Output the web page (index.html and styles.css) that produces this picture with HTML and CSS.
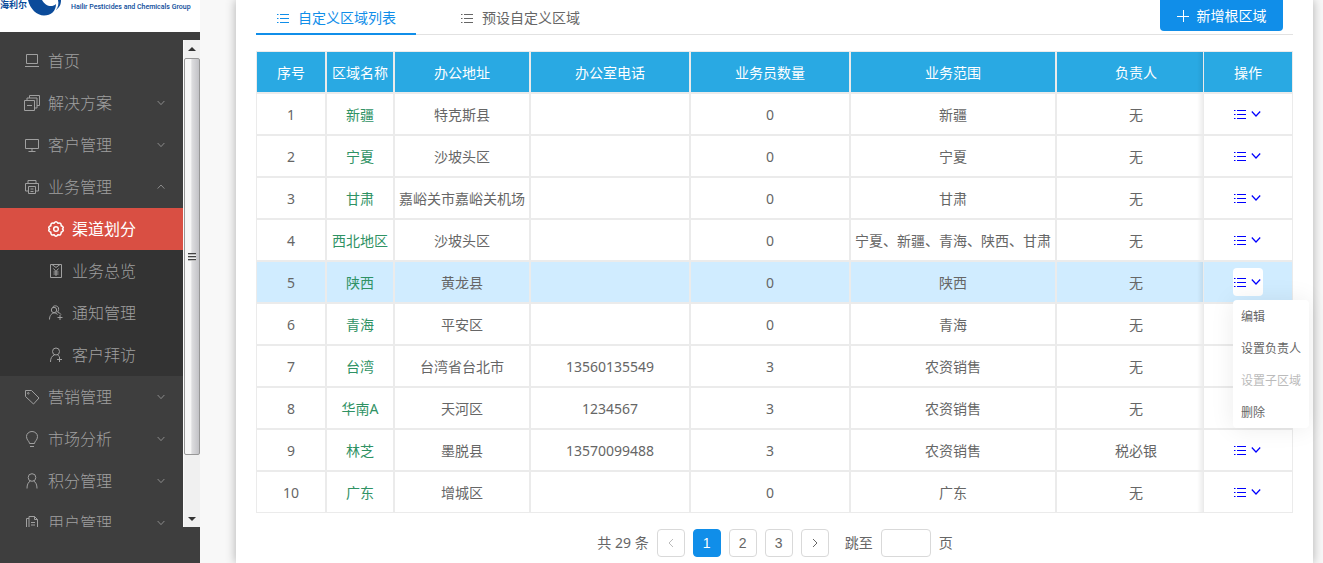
FILE: index.html
```html
<!DOCTYPE html>
<html lang="zh-CN">
<head>
<meta charset="utf-8">
<title>渠道划分</title>
<link rel="stylesheet" href="styles.css">
</head>
<body>
<svg class="sprite" aria-hidden="true">
  <symbol id="list" viewBox="0 0 12 12"><path d="M3 2.500h9M3 6.500h9M3 10.500h9M0 2.500h1.500M0 6.500h1.500M0 10.500h1.500"/></symbol>
  <symbol id="down" viewBox="0 0 10 10"><path d="M.8 2.500 5 7 9.200 2.500"/></symbol>
  <symbol id="up" viewBox="0 0 10 10"><path d="M.8 7 5 2.500 9.200 7"/></symbol>
</svg>
<div class="app">
  <aside class="sidebar">
    <div class="brand">
      <span class="brand-cn">海利尔</span>
      <svg class="brand-mark" viewBox="0 0 34 16"><path fill="#0b4b9a" d="M0 0C2 9 9 15.500 16 15.500S28 11 28 4C24 8 17 6 14 0Z"/><path fill="#0b4b9a" d="M33 0C33 4 32 7 28 10C30 7 31 4 30 0Z"/></svg>
      <span class="brand-en">Hailir Pesticides and Chemicals Group</span>
    </div>
    <div class="scroller">
      <nav class="menu">
        <a class="item" href="#"><svg class="icon" viewBox="0 0 16 16"><path d="M2.500 1.500h11v9h-11zM1 13.500h14"/></svg>首页</a>
        <a class="item" href="#"><svg class="icon" viewBox="0 0 16 16"><path d="M.5 5.500h10v10H.5zM3 10.500h5M3 5.500v-2.500h10v10h-2.500M5.500 3V.5h10v10H13"/></svg>解决方案<svg class="arrow"><use href="#down"/></svg></a>
        <a class="item" href="#"><svg class="icon" viewBox="0 0 16 16"><path d="M1.500 2.500h13v9h-13zM8 11.500v3M4.500 14.500h7"/></svg>客户管理<svg class="arrow"><use href="#down"/></svg></a>
        <a class="item" href="#"><svg class="icon" viewBox="0 0 16 16"><path d="M4 4.500v-3h8v3M4 12H1.500V4.500h13V12H12M4.500 7.500h7v7h-7zM6.500 10h3M6.500 12.500h3"/></svg>业务管理<svg class="arrow"><use href="#up"/></svg></a>
        <div class="submenu">
          <a class="item active" href="#"><svg class="icon" viewBox="0 0 16 16"><path d="M6 2.200Q8-.5 10 2.200Q13.300 1.400 13.200 4.700Q16.500 6 14.500 8Q16.500 10 13.200 11.300Q13.300 14.600 10 13.800Q8 16.500 6 13.800Q2.700 14.600 2.800 11.300Q-.5 10 1.500 8Q-.5 6 2.800 4.700Q2.700 1.400 6 2.200Z"/><circle cx="8" cy="8" r="2.300"/></svg>渠道划分</a>
          <a class="item" href="#"><svg class="icon" viewBox="0 0 16 16"><path d="M2.500 1.500h11v13h-11zM4 1.500l4 3 4-3M5.500 5.500 8 8.500l2.500-3M8 8.500V13M5.500 9h5M5.500 11h5"/></svg>业务总览</a>
          <a class="item" href="#"><svg class="icon" viewBox="0 0 16 16"><circle cx="6" cy="5" r="2.700"/><path d="M4.500 2.500C5.500 0 10 .5 10.500 3c.5 2-.5 4-2 5M1.500 14.500C1.500 10 4 8 6.500 8c1 0 2 .5 3 1.500M10 7.500c1.500.5 2.500 1 3 2M9.500 12.500h5M12 10v5"/></svg>通知管理</a>
          <a class="item" href="#"><svg class="icon" viewBox="0 0 16 16"><circle cx="8" cy="4.500" r="3.500"/><path d="M2.500 15c0-3.500 1-6 4-7M9.500 8l2 1.500M9 12.500h5M11.500 10v5"/></svg>客户拜访</a>
        </div>
        <a class="item" href="#"><svg class="icon" viewBox="0 0 16 16"><path d="M1.500 1.500h6L15 9l-5.500 6L1.500 7.500z"/><circle cx="4.300" cy="4.300" r=".8"/></svg>营销管理<svg class="arrow"><use href="#down"/></svg></a>
        <a class="item" href="#"><svg class="icon" viewBox="0 0 16 16"><path d="M5.500 12.500C5.500 10 2.500 9.500 2.500 5.500a5.500 5 0 0 1 11 0C13.500 9.500 10.500 10 10.500 12.500zM6 15.500h4"/></svg>市场分析<svg class="arrow"><use href="#down"/></svg></a>
        <a class="item" href="#"><svg class="icon" viewBox="0 0 16 16"><circle cx="8" cy="4.500" r="3.800"/><path d="M3 15.500C3 12 4 9 6.500 8M13 15.500C13 12 12 9 9.500 8"/></svg>积分管理<svg class="arrow"><use href="#down"/></svg></a>
        <a class="item" href="#"><svg class="icon" viewBox="0 0 16 16"><path d="M5 1.500h5.500l3 3v10H5zM10.500 1.500v3h3M5 3.500H2.500v11H5M7 7.500h4M7 10h4M7 12.500h4"/></svg>用户管理<svg class="arrow"><use href="#down"/></svg></a>
      </nav>
      <div class="scrollbar" aria-hidden="true">
        <svg class="sb-arrow" viewBox="0 0 8 8"><path d="M0 6 4 2l4 4z"/></svg>
        <div class="thumb"><i></i></div>
        <svg class="sb-arrow" viewBox="0 0 8 8"><path d="M0 2l4 4 4-4z"/></svg>
      </div>
    </div>
  </aside>
  <main class="content">
    <section class="card">
      <div class="tabs">
        <button class="tab selected"><svg class="list"><use href="#list"/></svg>自定义区域列表</button>
        <button class="tab"><svg class="list"><use href="#list"/></svg>预设自定义区域</button>
        <button class="add"><svg class="plus" viewBox="0 0 12 12"><path d="M6.500 0v12M0 6.500h12"/></svg>新增根区域</button>
      </div>
      <table class="grid">
        <colgroup><col class="c1"><col class="c2"><col class="c3"><col class="c4"><col class="c4"><col class="c6"><col class="c7"><col class="c8"></colgroup>
        <thead><tr><th>序号</th><th>区域名称</th><th>办公地址</th><th>办公室电话</th><th>业务员数量</th><th>业务范围</th><th>负责人</th><th>操作</th></tr></thead>
        <tbody>
          <tr><td>1</td><td>新疆</td><td>特克斯县</td><td></td><td>0</td><td>新疆</td><td>无</td><td><button class="ops" aria-label="操作"><svg class="list"><use href="#list"/></svg><svg class="chev"><use href="#down"/></svg></button></td></tr>
          <tr><td>2</td><td>宁夏</td><td>沙坡头区</td><td></td><td>0</td><td>宁夏</td><td>无</td><td><button class="ops" aria-label="操作"><svg class="list"><use href="#list"/></svg><svg class="chev"><use href="#down"/></svg></button></td></tr>
          <tr><td>3</td><td>甘肃</td><td>嘉峪关市嘉峪关机场</td><td></td><td>0</td><td>甘肃</td><td>无</td><td><button class="ops" aria-label="操作"><svg class="list"><use href="#list"/></svg><svg class="chev"><use href="#down"/></svg></button></td></tr>
          <tr><td>4</td><td>西北地区</td><td>沙坡头区</td><td></td><td>0</td><td>宁夏、新疆、青海、陕西、甘肃</td><td>无</td><td><button class="ops" aria-label="操作"><svg class="list"><use href="#list"/></svg><svg class="chev"><use href="#down"/></svg></button></td></tr>
          <tr class="hover"><td>5</td><td>陕西</td><td>黄龙县</td><td></td><td>0</td><td>陕西</td><td>无</td><td><div class="dropdown"><button class="ops open" aria-label="操作"><svg class="list"><use href="#list"/></svg><svg class="chev"><use href="#down"/></svg></button><div class="popup"><button>编辑</button><button>设置负责人</button><button disabled>设置子区域</button><button>删除</button></div></div></td></tr>
          <tr><td>6</td><td>青海</td><td>平安区</td><td></td><td>0</td><td>青海</td><td>无</td><td><button class="ops" aria-label="操作"><svg class="list"><use href="#list"/></svg><svg class="chev"><use href="#down"/></svg></button></td></tr>
          <tr><td>7</td><td>台湾</td><td>台湾省台北市</td><td>13560135549</td><td>3</td><td>农资销售</td><td>无</td><td><button class="ops" aria-label="操作"><svg class="list"><use href="#list"/></svg><svg class="chev"><use href="#down"/></svg></button></td></tr>
          <tr><td>8</td><td>华南A</td><td>天河区</td><td>1234567</td><td>3</td><td>农资销售</td><td>无</td><td><button class="ops" aria-label="操作"><svg class="list"><use href="#list"/></svg><svg class="chev"><use href="#down"/></svg></button></td></tr>
          <tr><td>9</td><td>林芝</td><td>墨脱县</td><td>13570099488</td><td>3</td><td>农资销售</td><td>税必银</td><td><button class="ops" aria-label="操作"><svg class="list"><use href="#list"/></svg><svg class="chev"><use href="#down"/></svg></button></td></tr>
          <tr><td>10</td><td>广东</td><td>增城区</td><td></td><td>0</td><td>广东</td><td>无</td><td><button class="ops" aria-label="操作"><svg class="list"><use href="#list"/></svg><svg class="chev"><use href="#down"/></svg></button></td></tr>
        </tbody>
      </table>
      <div class="pager">
        <span>共 29 条</span>
        <button class="page" disabled aria-label="上一页"><svg viewBox="0 0 8 8"><path d="M6 0 2 4l4 4"/></svg></button>
        <button class="page current">1</button>
        <button class="page">2</button>
        <button class="page">3</button>
        <button class="page" aria-label="下一页"><svg viewBox="0 0 8 8"><path d="m2 0 4 4-4 4"/></svg></button>
        <label class="jump">跳至<input type="text">页</label>
      </div>
    </section>
  </main>
</div>
</body>
</html>
```
FILE: styles.css
```css
* { box-sizing: border-box; }
body { margin: 0; color: #666; font: 14px/20px "Noto Sans", "Noto Sans CJK SC", sans-serif; }
button, input { font: inherit; color: inherit; margin: 0; padding: 0; border: 0; background: none; }
svg { fill: none; stroke: currentColor; flex: none; }
.sprite { position: absolute; width: 0; height: 0; }
.app { display: flex; height: 100vh; overflow: hidden; }

.sidebar { flex: none; width: 200px; background: #3e3e3e; }
.brand { display: flex; height: 32px; overflow: hidden; background: #fff; color: #0b4b9a; white-space: nowrap; }
.brand svg { stroke: none; }
.brand-cn { width: 28px; font-size: 9px; line-height: 10px; font-weight: 700; }
.brand-mark { width: 34px; height: 16px; }
.brand-en { margin-left: 9px; font: 500 8px/14px "Liberation Sans Narrow", Roboto, sans-serif; font-size: 7px; }
.scroller { display: flex; height: calc(100vh - 76px); margin-top: 8px; overflow: hidden; }
.menu { flex: 1; }
.item { display: flex; align-items: center; height: 42px; padding: 0 18px 0 24px; color: #a0a0a0; font-size: 16px; font-weight: 300; text-decoration: none; }
.icon { width: 16px; height: 16px; margin-right: 8px; }
.arrow { width: 8px; height: 8px; margin-left: auto; }
.submenu { background: #333; }
.submenu .item { padding-left: 48px; }
.submenu .active { background: #d94f43; color: #fff; font-weight: 400; }
.active .icon { stroke-width: 1.5; }
.scrollbar { display: flex; flex-direction: column; width: 17px; background: #f0f0f0; border-left: 1px solid #fafafa; }
.sb-arrow { width: 8px; height: 8px; margin: 5px auto; fill: #333; stroke: none; }
.thumb { flex: 398; display: flex; align-items: center; justify-content: center; border: 1px solid #979797; border-radius: 2px; background: linear-gradient(90deg, #f6f6f6 0 40%, #dcdcde 50%, #c2c2c6); }
.thumb i { width: 8px; height: 8px; background: repeating-linear-gradient(#444 0 1px, #bbb 1px 2px, #eee 2px 3px); }
.scrollbar .sb-arrow:last-child { margin-top: 60px; margin-bottom: 4px; }

.content { flex: 1; min-width: 0; padding: 0 10px 0 36px; background: #f8f8f8; }
.card { height: 100%; padding: 0 20px; background: #fff; box-shadow: 0 0 10px rgba(0, 0, 0, .3); }
.tabs { display: flex; height: 35px; border-bottom: 1px solid #e2e2e2; }
.tab { display: flex; align-items: center; height: 35px; width: 160px; margin-right: 24px; padding: 2px 0 0 21px; border-bottom: 2px solid transparent; }
.tab.selected { color: #108ee9; border-color: #108ee9; }
.list { width: 12px; height: 12px; }
.tab .list { margin-right: 9px; }
.add { display: flex; align-items: center; justify-content: center; width: 123px; height: 31px; margin: 0 10px 0 auto; border-radius: 0 0 4px 4px; background: #108ee9; color: #fff; }
.plus { width: 12px; height: 12px; margin-right: 8px; }

.grid { width: 100%; margin: 16px 0; table-layout: fixed; border-collapse: separate; border-spacing: 0; text-align: center; }
.c1 { width: 70px; }
.c2 { width: 68px; }
.c3 { width: 136px; }
.c4 { width: 160px; }
.c6 { width: 206px; }
.c7 { width: 147px; }
.c8 { width: 90px; }
.grid th, .grid td { height: 42px; padding: 2px 0 0; border: 1px solid #ebebeb; white-space: nowrap; }
.grid th { background: #29a9e3; color: #fff; font-weight: 400; }
.grid td:nth-child(2) { color: #2f9264; }
.grid td:nth-child(8) { padding: 0; }
.grid tr > :nth-child(7) { padding-left: 12px; border-right: 0; background-image: linear-gradient(270deg, rgba(0, 0, 0, .07), transparent 6px); }
.hover { background: #d0ecff; }
.ops { display: inline-flex; align-items: center; justify-content: space-between; width: 30px; height: 28px; padding: 0 2px 0 1px; border-radius: 4px; color: #00f; stroke-width: 1.2; vertical-align: middle; }
.chev { width: 10px; height: 10px; }
.open { background: #fff; }
.dropdown { position: relative; display: inline-flex; vertical-align: middle; }
.popup { position: absolute; z-index: 1; top: 32px; left: 0; display: grid; width: 76px; border-radius: 4px; background: #fff; box-shadow: 0 0 24px rgba(0, 0, 0, .08); }
.popup button { height: 32px; padding: 2px 0 0 8px; font-size: 12px; text-align: left; }
.popup button:disabled { color: #bbb; }

.pager { display: flex; align-items: center; justify-content: center; gap: 8px; padding-left: 1px; }
.page { display: flex; align-items: center; justify-content: center; width: 28px; height: 28px; border: 1px solid #d9d9d9; border-radius: 4px; font-family: "Liberation Sans", sans-serif; }
.page svg { width: 8px; height: 8px; }
.page:disabled { color: #bbb; }
.current { border-color: #108ee9; background: #108ee9; color: #fff; }
.jump { display: flex; align-items: center; gap: 8px; margin-left: 8px; }
.jump input { width: 50px; height: 28px; padding: 0 6px; border: 1px solid #d9d9d9; border-radius: 4px; }
```
